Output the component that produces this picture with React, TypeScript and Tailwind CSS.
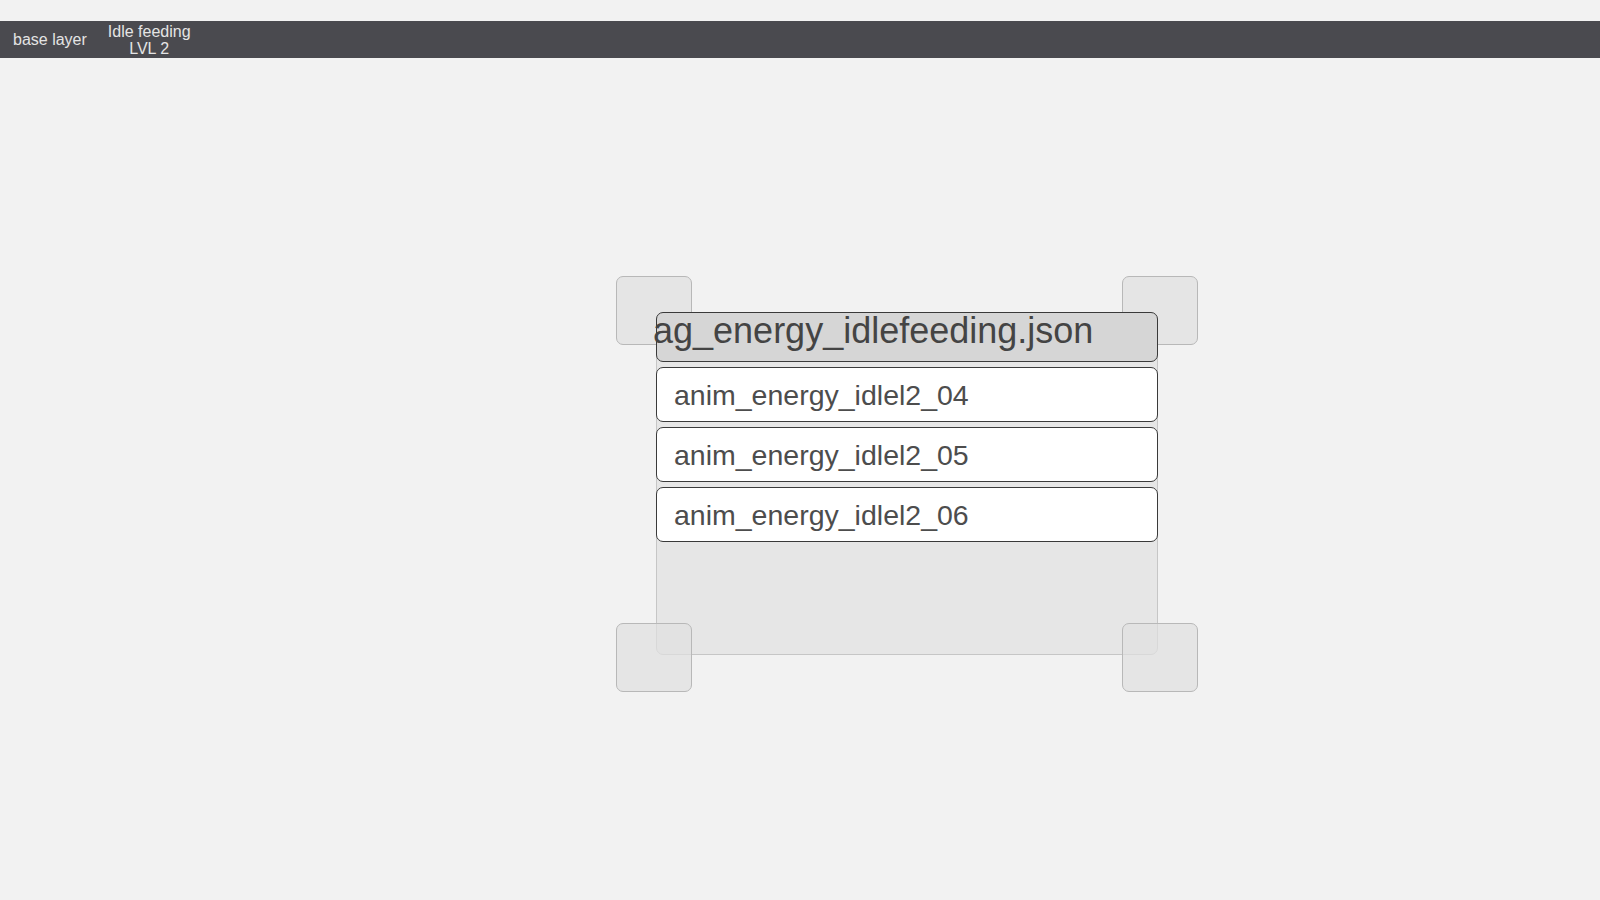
import React from 'react';

const frames = ['anim_energy_idlel2_04', 'anim_energy_idlel2_05', 'anim_energy_idlel2_06'];

function Handle({ className }: { className: string }) {
  return (
    <div
      className={`absolute w-[76px] h-[69px] rounded-[7px] border border-[#b8b8b8] bg-[#e0e0e0]/70 ${className}`}
    />
  );
}

export default function App() {
  return (
    <div className="w-[1600px] h-[900px] bg-[#f2f2f2] pt-[21px] overflow-hidden font-['Liberation_Sans',Arial,sans-serif]">
      {/* Layer bar */}
      <div className="h-[37px] bg-[#4a4a4f] flex items-center gap-[21px] pl-[13px] text-[16px] leading-[17px] text-[#e4e4e4]">
        <span>base layer</span>
        <span className="text-center">
          Idle feeding
          <br />
          LVL 2
        </span>
      </div>

      {/* Canvas */}
      <div className="relative pl-[656px] pt-[254px]">
        <div className="relative w-[502px] h-[343px]">
          <div className="absolute inset-0 rounded-[7px] border border-[#c6c6c6] bg-[#e6e6e6]" />

          <Handle className="-left-[40px] -top-[36px]" />
          <Handle className="left-[466px] -top-[36px]" />
          <Handle className="-left-[40px] top-[311px]" />
          <Handle className="left-[466px] top-[311px]" />

          <div className="relative flex flex-col gap-[5px]">
            <div className="h-[50px] rounded-[7px] border border-[#3a3a3a] bg-[#d6d6d6] text-[36px] leading-[36px] text-[#444444] whitespace-nowrap -indent-[4px]">
              ag_energy_idlefeeding.json
            </div>
            {frames.map((f) => (
              <div
                key={f}
                className="h-[55px] rounded-[7px] border border-[#3a3a3a] bg-white flex items-center pl-[17px] pt-[2px] text-[28.5px] text-[#4d4d4d] whitespace-nowrap"
              >
                {f}
              </div>
            ))}
          </div>
        </div>
      </div>
    </div>
  );
}
